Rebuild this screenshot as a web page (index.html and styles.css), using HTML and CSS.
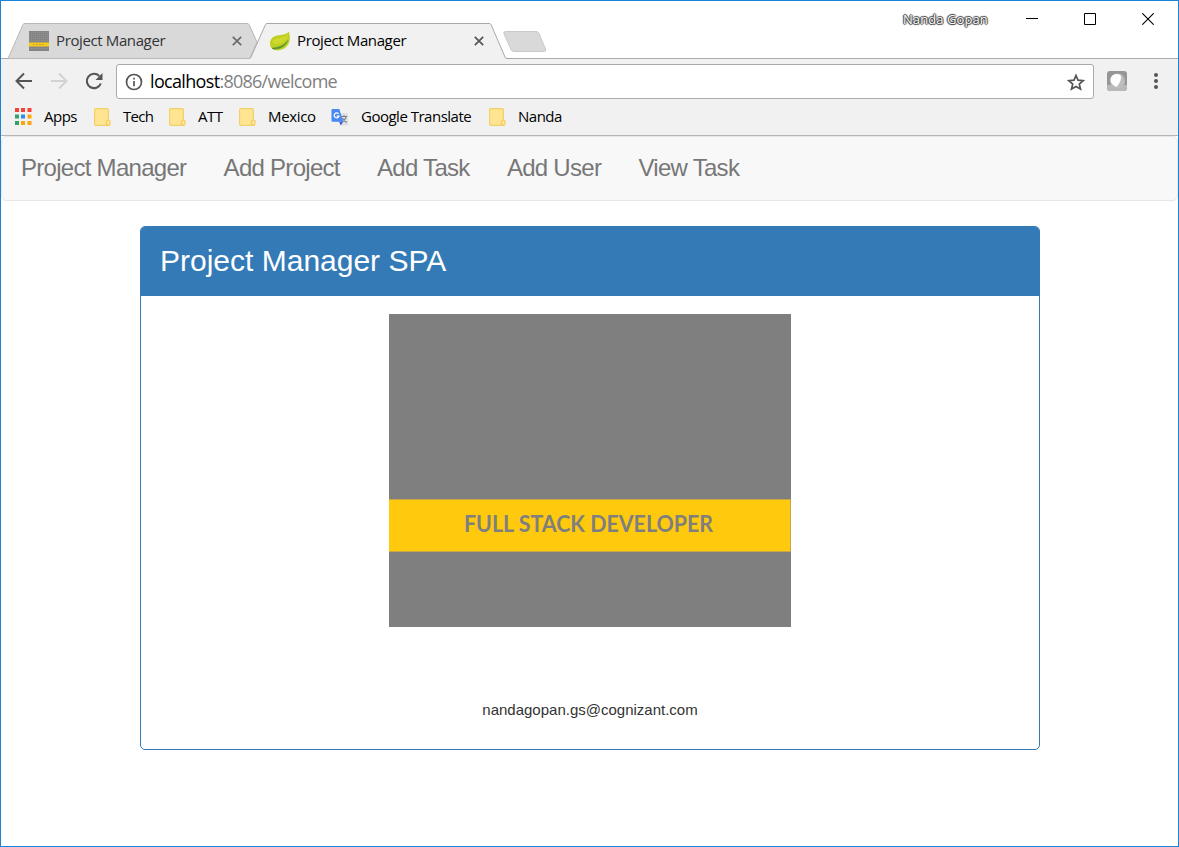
FILE: index.html
```html
<!DOCTYPE html>
<html lang="en">
<head>
<meta charset="utf-8">
<title>Project Manager</title>
<link rel="stylesheet" href="styles.css">
</head>
<body>
<div class="window">
  <header class="tabstrip">
    <div class="tab tab-back">
      <svg class="tab-shape" width="252" height="37" viewBox="0 0 252 37"><path d="M0 35.500L15 1.500Q15.500 .5 16.500 .5H239Q240.500 .5 241 1.500L249 19L242 35.500Z" fill="#d9d9d9" stroke="#b9b9b9"/></svg>
      <svg class="favicon" width="20" height="20" viewBox="0 0 20 20"><path fill="#858585" d="M0 0h20v20H0z"/><path d="M0 1.500h20M0 3.500h20M0 5.500h20M0 7.500h20M0 9.500h20M0 17.500h20" stroke="#929292" stroke-dasharray="1 1"/><path fill="#f8cb19" d="M0 11.500h20v4H0z"/><path d="M4 13.500h12" stroke="#c7a441" stroke-dasharray="2 1"/></svg>
      <span class="tab-title">Project Manager</span>
      <svg class="close" width="10" height="10" viewBox="0 0 10 10"><path d="M.8.8l8.400 8.400M9.200.8L.8 9.200" stroke="#6b6b6b" stroke-width="1.700"/></svg>
    </div>
    <div class="tab tab-active">
      <svg class="tab-shape" width="259" height="37" viewBox="0 0 259 37"><path d="M0 37V35.500L2 34L16.500 1.500Q17 .5 18 .5H240Q241.500 .5 242 1.500L256 34Q256.500 35.500 258 35.500V37Z" fill="#f1f1f1"/><path d="M0 35.500Q1.500 35.500 2 34L16.500 1.500Q17 .5 18 .5H240Q241.500 .5 242 1.500L256 34Q256.500 35.500 258 35.500" fill="none" stroke="#a9a9a9"/></svg>
      <svg class="favicon" width="20" height="20" viewBox="0 0 20 20"><path fill="#bfd022" d="M18.800 .5C16 4 12 3.500 7 4.500C2 5.500 0 9 0 12.500C0 17 3 19.500 8 19.300C16 19 22.500 12 18.800 .5Z"/><path fill="#cfd92c" d="M18 3C15 8 8 5.500 2.500 10C1.500 13 8 13.500 12 11.500C16 9.500 18.500 7 18 3Z"/><path d="M2 17.200Q13 16.500 18 9.500Q14.500 17.500 4 18.200Z" fill="#4c9635" stroke="#5c9a2e" stroke-width=".7"/></svg>
      <span class="tab-title">Project Manager</span>
      <svg class="close" width="10" height="10" viewBox="0 0 10 10"><path d="M.8.8l8.400 8.400M9.200.8L.8 9.200" stroke="#555" stroke-width="1.700"/></svg>
    </div>
    <svg class="new-tab" width="46" height="24" viewBox="0 0 46 24"><path d="M4 1.500H34Q36 1.500 37 3.500L43.500 19Q44.500 21.500 42 21.500H12Q10 21.500 9 19.500L2 4Q1 1.500 4 1.500Z" fill="#d9d9d9" stroke="#c9c9c9"/></svg>
    <div class="window-controls">
      <span class="profile">Nanda Gopan</span>
      <svg width="12" height="12" viewBox="0 0 12 12"><path d="M0 5.500h12" stroke="#000"/></svg>
      <svg width="12" height="12" viewBox="0 0 12 12"><path d="M.5.5h11v11H.5z" fill="none" stroke="#000"/></svg>
      <svg width="12" height="12" viewBox="0 0 12 12"><path d="M.3.3l11.400 11.400M11.700.3L.3 11.700" stroke="#000" stroke-width="1.100"/></svg>
    </div>
  </header>

  <div class="toolbar">
    <svg class="back" width="18" height="18" viewBox="0 0 18 18" fill="none" stroke="#555" stroke-width="2"><path d="M17 9H2M9 1.500L1.500 9L9 16.500"/></svg>
    <svg class="forward" width="18" height="18" viewBox="0 0 18 18" fill="none" stroke="#d2d2d2" stroke-width="2"><path d="M1 9h15M9 1.500L16.500 9L9 16.500"/></svg>
    <svg class="reload" width="18" height="18" viewBox="0 0 18 18"><path d="M15.800 11.500A7.200 7.200 0 1 1 14.200 3.900" fill="none" stroke="#555" stroke-width="2.100"/><path d="M17.500 1v7h-7z" fill="#555"/></svg>
    <div class="omnibox">
      <svg width="18" height="18" viewBox="0 0 18 18"><circle cx="9" cy="9" r="7.500" fill="none" stroke="#555" stroke-width="1.700"/><path d="M9 8v5.300M9 4.700v1.800" stroke="#555" stroke-width="1.700"/></svg>
      <span class="url"><span class="host">localhost</span>:8086/welcome</span>
      <svg class="star" width="18" height="18" viewBox="0 0 18 18"><path d="M9 2.500l2 4.700 5.200.5-3.900 3.400 1.200 5L9 13.400l-4.500 2.700 1.200-5-3.900-3.400 5.200-.5z" fill="none" stroke="#555" stroke-width="1.700"/></svg>
    </div>
    <svg class="extension" width="20" height="20" viewBox="0 0 20 20"><rect width="20" height="20" rx="3" fill="#969696"/><path fill="#b8b8b8" d="M0 14h20v3q0 3-3 3H3q-3 0-3-3z"/><circle cx="10.500" cy="10" r="7.500" fill="#bdbdbd"/><path d="M5.500 4.500Q9 2 13.500 4Q15.500 9 9.500 16Q3.500 13.500 3.500 8.500Q3.500 6 5.500 4.500Z" fill="#fff"/></svg>
    <svg class="menu" width="4" height="18" viewBox="0 0 4 18" fill="#555"><circle cx="2" cy="3" r="2"/><circle cx="2" cy="9" r="2"/><circle cx="2" cy="15" r="2"/></svg>
  </div>

  <nav class="bookmarks">
    <a class="bookmark apps"><svg width="17" height="18" viewBox="0 0 17 18"><path fill="#f44336" d="M0 0h4v4H0zM6 0h4v4H6zM12.500 0h4v4h-4z"/><path fill="#34a267" d="M0 6.500h4v4H0zM0 13h4v4H0z"/><path fill="#2d8cf0" d="M6 6.500h4v4H6z"/><path fill="#fba60d" d="M12.500 6.500h4v4h-4zM6 13h4v4H6zM12.500 13h4v4h-4z"/></svg><span>Apps</span></a>
    <a class="bookmark tech"><svg class="folder" width="17" height="18" viewBox="0 0 17 18"><path d="M2 .6H13Q14.400.6 14.400 2V12H15Q16 12 16 13V16Q16 17.400 14.500 17.400H2Q.6 17.400.6 16V2Q.6.6 2 .6Z" fill="#ffe591" stroke="#f1cf69" stroke-width="1.200"/><path d="M14.400 12Q12.200 12 12.200 14.500Q12.200 17 14.400 17" fill="none" stroke="#eec75c"/></svg><span>Tech</span></a>
    <a class="bookmark att"><svg class="folder" width="17" height="18" viewBox="0 0 17 18"><path d="M2 .6H13Q14.400.6 14.400 2V12H15Q16 12 16 13V16Q16 17.400 14.500 17.400H2Q.6 17.400.6 16V2Q.6.6 2 .6Z" fill="#ffe591" stroke="#f1cf69" stroke-width="1.200"/><path d="M14.400 12Q12.200 12 12.200 14.500Q12.200 17 14.400 17" fill="none" stroke="#eec75c"/></svg><span>ATT</span></a>
    <a class="bookmark mexico"><svg class="folder" width="17" height="18" viewBox="0 0 17 18"><path d="M2 .6H13Q14.400.6 14.400 2V12H15Q16 12 16 13V16Q16 17.400 14.500 17.400H2Q.6 17.400.6 16V2Q.6.6 2 .6Z" fill="#ffe591" stroke="#f1cf69" stroke-width="1.200"/><path d="M14.400 12Q12.200 12 12.200 14.500Q12.200 17 14.400 17" fill="none" stroke="#eec75c"/></svg><span>Mexico</span></a>
    <a class="bookmark translate"><svg width="18" height="19" viewBox="0 0 19 19"><path d="M8 5h9q1 0 1 1v11q0 1-1 1h-6z" fill="#dedede"/><path d="M10.500 8.500h6.500M13.700 7v1.500M11.500 14.500Q15 12.500 16 8.500M12 10q2 4 5 4.500" fill="none" stroke="#75828d" stroke-width="1.200"/><path d="M1.500.5h7.300l4 13.500H1.500Q.5 14 .5 13V1.500Q.5.5 1.500.5z" fill="#4688f4"/><path d="M8.500 14h4.300l-2.500 4z" fill="#3d5fd6"/><path d="M8 5.600A2.600 2.600 0 1 0 8.500 8H6" fill="none" stroke="#fff" stroke-width="1.300"/></svg><span>Google Translate</span></a>
    <a class="bookmark nanda"><svg class="folder" width="17" height="18" viewBox="0 0 17 18"><path d="M2 .6H13Q14.400.6 14.400 2V12H15Q16 12 16 13V16Q16 17.400 14.500 17.400H2Q.6 17.400.6 16V2Q.6.6 2 .6Z" fill="#ffe591" stroke="#f1cf69" stroke-width="1.200"/><path d="M14.400 12Q12.200 12 12.200 14.500Q12.200 17 14.400 17" fill="none" stroke="#eec75c"/></svg><span>Nanda</span></a>
  </nav>

  <main class="page">
    <nav class="navbar">
      <a>Project Manager</a><a>Add Project</a><a>Add Task</a><a>Add User</a><a>View Task</a>
    </nav>
    <section class="panel">
      <h1 class="panel-heading">Project Manager SPA</h1>
      <div class="panel-body">
        <svg class="banner" width="402" height="313" viewBox="0 0 402 313">
          <path fill="#7f7f7f" d="M0 0h402v313H0z"/>
          <path fill="#ffc90e" stroke="#c5a746" d="M-1 185.500h402.500v52H-1z"/>
          <text class="banner-text" x="75" y="218" textLength="249" lengthAdjust="spacingAndGlyphs">FULL STACK DEVELOPER</text>
        </svg>
        <p class="email">nandagopan.gs@cognizant.com</p>
      </div>
    </section>
  </main>
</div>
</body>
</html>
```
FILE: styles.css
```css
* { box-sizing: border-box; }
body { margin: 0; background: #fff; }
svg { display: block; flex: none; }
.window {
  width: 1179px; height: 847px; border: 1px solid #1883d7;
  display: flex; flex-direction: column; overflow: hidden;
  font-family: "Open Sans", "Noto Sans", sans-serif; color: #000;
}
.tabstrip { height: 57px; flex: none; display: flex; align-items: flex-end; padding-left: 7px; }
.tab { position: relative; height: 35px; display: flex; align-items: center; }
.tab-back { width: 241px; padding-left: 21px; }
.tab-active { width: 253px; padding-left: 21px; z-index: 1; }
.tab-shape { position: absolute; left: 0; top: 0; }
.favicon, .tab-title, .close { position: relative; }
.tab-title { margin: 0 0 2px 7px; width: 176px; font-size: 15px; letter-spacing: -.38px; line-height: 20px; white-space: nowrap; }
.tab-active .tab-title { width: 177px; }
.tab-back .tab-title { color: #333; }
.new-tab { margin: 0 0 4px; }
.window-controls { margin-left: auto; align-self: flex-start; display: flex; gap: 46px; align-items: center; padding: 8px 24px 0 0; height: 28px; }
.profile { width: 85px; margin-right: -8px; color: #fff; font-size: 13px; line-height: 20px; letter-spacing: .08px; white-space: nowrap;
  text-shadow: -1px 0 1px #333, 1px 0 1px #333, 0 -1px 1px #333, 0 1px 1px #333; }
.toolbar { height: 42px; flex: none; background: #f1f1f1; border-top: 1px solid #a9a9a9; display: flex; align-items: center; padding: 3px 20px 0 14px; }
.forward { margin-left: 17px; }
.reload { margin-left: 17px; }
.omnibox { flex: 1; height: 35px; margin: 1px 13px 0; border: 1px solid #a9a9a9; border-radius: 3px; background: #fff; display: flex; align-items: center; padding: 0 8px; }
.url { margin: 0 0 2px 7px; font-size: 18px; letter-spacing: -.76px; color: #808080; white-space: nowrap; }
.host { color: #000; letter-spacing: -.66px; }
.star { margin-left: auto; }
.menu { margin-left: 27px; }
.bookmarks { height: 36px; flex: none; background: #f1f1f1; border-bottom: 1px solid #b5b5b5; display: flex; padding: 7px 0 0 14px; }
.bookmark { display: flex; align-items: center; height: 20px; font-size: 15px; letter-spacing: -.5px; white-space: nowrap; }
.bookmark span { margin: 0 0 2px 12px; }
.apps { width: 79px; }
.tech { width: 75px; }
.tech span { letter-spacing: -.7px; }
.att { width: 70px; }
.mexico { width: 92px; }
.mexico span { letter-spacing: -.35px; }
.translate { width: 158px; }
.page { flex: 1; font-family: "Liberation Sans", Arial, sans-serif; }
.navbar { height: 65px; background: #f8f8f8; border: 1px solid #e7e7e7; border-radius: 5px; display: flex; align-items: center; padding: 0 0 2px 19px; gap: 37.3px; }
.navbar a { font-size: 24px; letter-spacing: -.72px; color: #777; white-space: nowrap; }
.panel { width: 900px; height: 524px; margin: 25px 0 0 139px; border: 1px solid #337ab7; border-radius: 5px; overflow: hidden; }
.panel-heading { margin: 0; height: 69px; background: #337ab7; color: #fff; font-size: 30px; font-weight: 400; line-height: 68px; padding-left: 19px; }
.panel-body { display: flex; flex-direction: column; align-items: center; padding-top: 18px; }
.banner-text { font: bold 22px Lato, sans-serif; fill: #7f7f7f; }
.email { margin: 73px 0 0; font-size: 15px; line-height: 20px; color: #333; }
```
